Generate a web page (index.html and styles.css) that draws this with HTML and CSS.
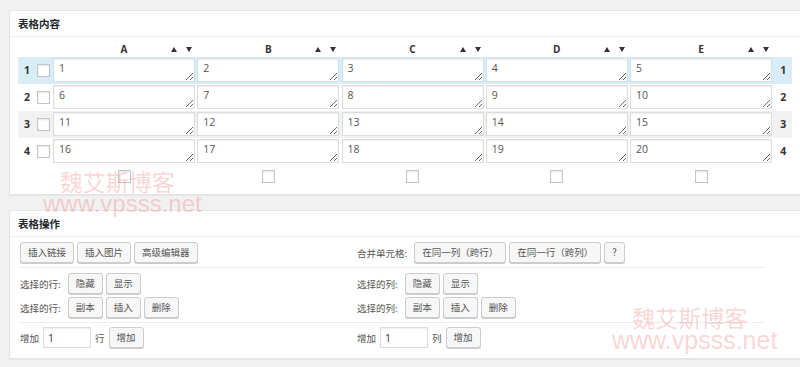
FILE: index.html
```html
<!DOCTYPE html>
<html lang="zh-CN">
<head>
    <meta charset="UTF-8">
    <meta name="viewport" content="width=device-width, initial-scale=1.0">
    <title>表格编辑</title>
    <link rel="stylesheet" href="styles.css">
</head>
<body>
    <!-- 表格内容 -->
    <div class="postbox">
        <h2 class="hndle">表格内容</h2>
        <div class="inside">
            <div class="trow thead">
                <span></span><span></span>
                <div class="col-head"><b>A</b><span class="sort"><i class="up"></i><i class="down"></i></span></div>
                <div class="col-head"><b>B</b><span class="sort"><i class="up"></i><i class="down"></i></span></div>
                <div class="col-head"><b>C</b><span class="sort"><i class="up"></i><i class="down"></i></span></div>
                <div class="col-head"><b>D</b><span class="sort"><i class="up"></i><i class="down"></i></span></div>
                <div class="col-head"><b>E</b><span class="sort"><i class="up"></i><i class="down"></i></span></div>
                <span></span>
            </div>

            <div class="trow head-row">
                <span class="num">1</span><input type="checkbox" class="cb">
                <textarea>1</textarea><textarea>2</textarea><textarea>3</textarea><textarea>4</textarea><textarea>5</textarea>
                <span class="num">1</span>
            </div>
            <div class="trow">
                <span class="num">2</span><input type="checkbox" class="cb">
                <textarea>6</textarea><textarea>7</textarea><textarea>8</textarea><textarea>9</textarea><textarea>10</textarea>
                <span class="num">2</span>
            </div>
            <div class="trow odd">
                <span class="num">3</span><input type="checkbox" class="cb">
                <textarea>11</textarea><textarea>12</textarea><textarea>13</textarea><textarea>14</textarea><textarea>15</textarea>
                <span class="num">3</span>
            </div>
            <div class="trow">
                <span class="num">4</span><input type="checkbox" class="cb">
                <textarea>16</textarea><textarea>17</textarea><textarea>18</textarea><textarea>19</textarea><textarea>20</textarea>
                <span class="num">4</span>
            </div>

            <div class="trow tfoot">
                <span></span><span></span>
                <input type="checkbox" class="cb"><input type="checkbox" class="cb"><input type="checkbox" class="cb"><input type="checkbox" class="cb"><input type="checkbox" class="cb">
                <span></span>
            </div>
        </div>
    </div>

    <!-- 表格操作 -->
    <div class="postbox">
        <h2 class="hndle">表格操作</h2>
        <div class="inside">
            <div class="ops">
                <div class="ops-cell">
                    <div class="line">
                        <button>插入链接</button><button>插入图片</button><button>高级编辑器</button>
                    </div>
                </div>
                <div class="ops-cell">
                    <div class="line">
                        <label>合并单元格:</label>
                        <button>在同一列（跨行）</button><button>在同一行（跨列）</button><button>?</button>
                    </div>
                </div>
            </div>
            <div class="ops">
                <div class="ops-cell">
                    <div class="line"><label>选择的行:</label><button>隐藏</button><button>显示</button></div>
                    <div class="line"><label>选择的行:</label><button>副本</button><button>插入</button><button>删除</button></div>
                </div>
                <div class="ops-cell">
                    <div class="line"><label>选择的列:</label><button>隐藏</button><button>显示</button></div>
                    <div class="line"><label>选择的列:</label><button>副本</button><button>插入</button><button>删除</button></div>
                </div>
            </div>
            <div class="ops last">
                <div class="ops-cell">
                    <div class="line add"><label>增加</label><input type="text" value="1" class="small-text"><label>行</label><button>增加</button></div>
                </div>
                <div class="ops-cell">
                    <div class="line add"><label>增加</label><input type="text" value="1" class="small-text"><label>列</label><button>增加</button></div>
                </div>
            </div>
        </div>
    </div>

    <!-- watermarks -->
    <div class="mark mark-one"><span>魏艾斯博客</span><span class="url">www.vpsss.net</span></div>
    <div class="mark mark-two"><span>魏艾斯博客</span><span class="url">www.vpsss.net</span></div>
</body>
</html>
```

FILE: styles.css
```css
html, body {
    overflow: hidden;
}
body {
    margin: 0;
    padding: 10px 0 0 9px;
    background-color: #f1f1f1;
    font-family: "Noto Sans CJK SC", sans-serif;
    color: #444;
    position: relative;
    height: 367px;
    box-sizing: border-box;
}

.postbox {
    background-color: #fff;
    border: 1px solid #e5e5e5;
    border-right: none;
    box-shadow: 0 1px 1px rgba(0, 0, 0, 0.04);
    margin-bottom: 15px;
}
.hndle {
    margin: 0;
    height: 25px;
    line-height: 25px;
    padding: 0 8px;
    font-size: 10.5px;
    font-weight: 700;
    color: #23282d;
    border-bottom: 1px solid #eee;
}
.inside {
    padding: 0 8px 7px;
}

/* table rows */
.trow {
    display: grid;
    grid-template-columns: 18px 17px repeat(5, 144.25px) 18px;
    align-items: center;
    height: 27px;
    box-sizing: border-box;
    padding: 1px 0 2px;
}
.thead {
    height: 20px;
    padding: 0;
    align-items: end;
}
.head-row {
    background-color: #d9edf7;
}
.odd {
    background-color: #f1f1f1;
}
.tfoot {
    height: 22px;
    padding: 5px 0 0;
    align-items: start;
}
.tfoot .cb {
    justify-self: center;
    margin-left: -2px;
}
.num {
    text-align: center;
    font-family: "Open Sans", sans-serif;
    font-weight: 700;
    font-size: 10.5px;
    color: #333;
}
.col-head {
    display: grid;
    grid-template-columns: 1fr auto 1fr;
    align-items: center;
    width: 142px;
    line-height: 14px;
    padding-bottom: 1px;
}
.col-head b {
    grid-column: 2;
    font-family: "Open Sans", sans-serif;
    font-size: 10px;
    color: #333;
}
.sort {
    grid-column: 3;
    justify-self: end;
    display: flex;
    gap: 9px;
    margin-right: 3px;
}
.sort i {
    display: block;
    width: 0;
    height: 0;
    border-left: 3px solid transparent;
    border-right: 3px solid transparent;
}
.sort .up {
    border-bottom: 5px solid #333;
}
.sort .down {
    border-top: 5px solid #333;
}

.cb {
    appearance: none;
    -webkit-appearance: none;
    width: 13px;
    height: 13px;
    margin: 0 0 0 1px;
    border: 1px solid #c3c6c9;
    background-color: #fff;
    box-shadow: inset 0 1px 2px rgba(0, 0, 0, 0.1);
    box-sizing: border-box;
}

textarea {
    width: 142px;
    height: 24px;
    margin: 0;
    padding: 3px 5px;
    box-sizing: border-box;
    border: 1px solid #ddd;
    box-shadow: inset 0 1px 2px rgba(0, 0, 0, 0.07);
    font-family: "Open Sans", sans-serif;
    font-size: 10.5px;
    line-height: 13px;
    color: #555;
    overflow: hidden;
    resize: vertical;
}
.head-row textarea {
    border-color: #cde2ed;
}

/* operations */
.ops {
    display: grid;
    grid-template-columns: 337px 410px;
    border-bottom: 1px solid #eee;
    width: 747px;
    padding: 5px 0 4px;
}
.ops:first-child {
    padding-top: 5px;
}
.ops.last {
    border-bottom: none;
    padding: 4px 0 3px;
}
.ops-cell {
    display: flex;
    flex-direction: column;
    gap: 3px;
}
.line {
    display: flex;
    align-items: center;
    gap: 3px;
    padding-left: 2px;
    height: 21px;
}
.line label {
    font-size: 9.5px;
    color: #555;
    margin-right: 4px;
}
.add label {
    margin-right: 1px;
}
.add .small-text + label {
    margin-left: 1px;
}
button {
    height: 21px;
    padding: 0 7px;
    font-family: "Noto Sans CJK SC", sans-serif;
    font-size: 9.5px;
    line-height: 19px;
    color: #555;
    background-color: #f7f7f7;
    border: 1px solid #ccc;
    border-radius: 3px;
    box-shadow: 0 1px 0 #ccc;
    box-sizing: border-box;
    cursor: pointer;
}
.small-text {
    width: 48px;
    height: 21px;
    margin: 0;
    padding: 0 4px;
    box-sizing: border-box;
    border: 1px solid #ddd;
    box-shadow: inset 0 1px 2px rgba(0, 0, 0, 0.07);
    font-family: "Open Sans", sans-serif;
    font-size: 10.5px;
    color: #333;
}

/* watermark over the page */
.mark {
    position: absolute;
    display: flex;
    flex-direction: column;
    align-items: center;
    color: rgba(235, 70, 70, 0.24);
    pointer-events: none;
}
.mark span {
    font-size: 23px;
    line-height: 22px;
    font-family: "Noto Sans CJK SC", sans-serif;
    margin-right: 10px;
}
.mark .url {
    font-family: "Liberation Sans", Arial, sans-serif;
    font-size: 24px;
    line-height: 22px;
    margin: 1px 0 0;
}
.mark-one {
    left: 43px;
    top: 170px;
}
.mark-two {
    left: 612px;
    top: 306px;
}
.mark-two .url {
    font-size: 25px;
}
```
